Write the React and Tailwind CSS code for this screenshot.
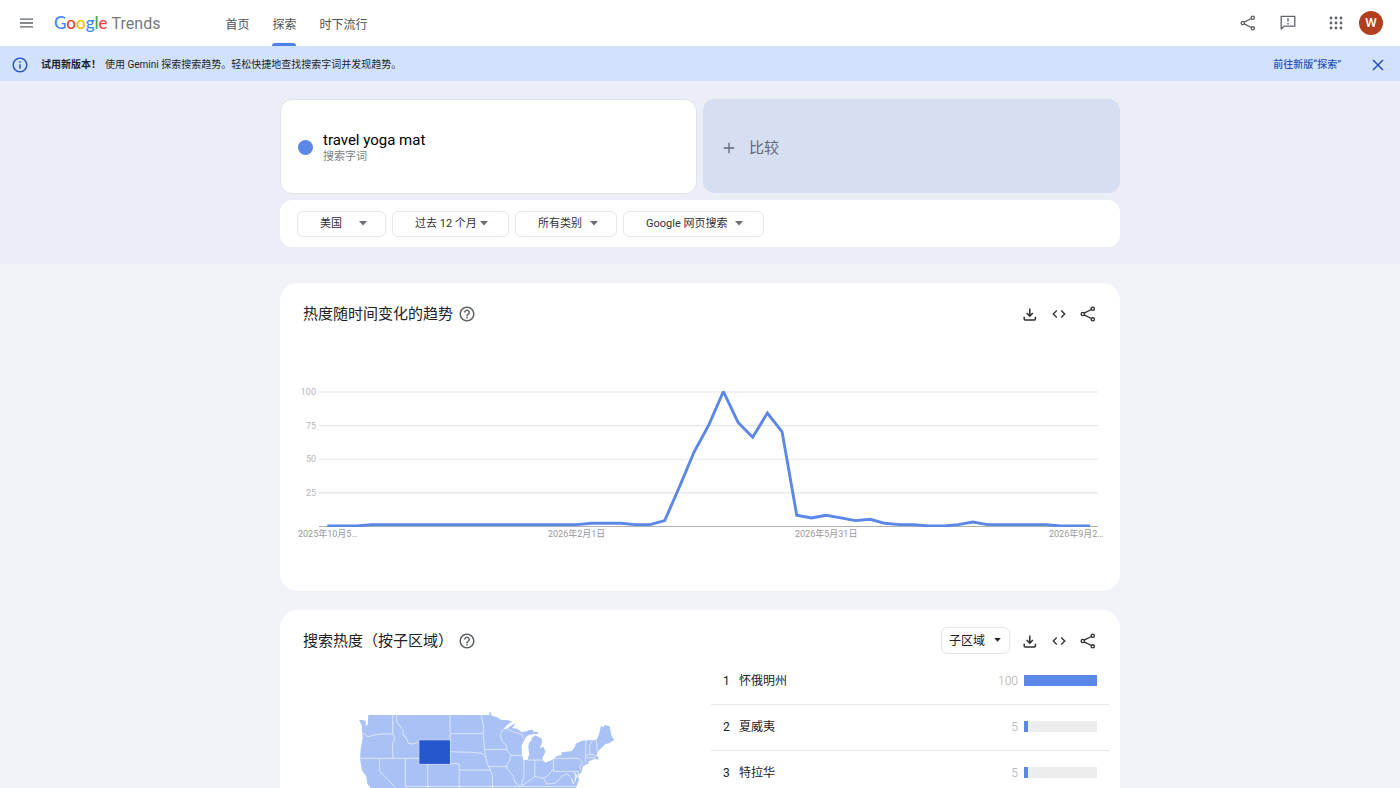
import React from "react";
import { MdHelpOutline, MdInfoOutline, MdCode } from "react-icons/md";

const BLUE = "#5a87e8";

const WEEKLY = [
  0, 0, 0, 1, 1, 1, 1, 1, 1, 1, 1, 1, 1, 1, 1, 1, 1, 1, 2, 2, 2, 1, 1, 4, 29, 55, 75,
  100, 77, 66, 84, 70, 8, 6, 8, 6, 4, 5, 2, 1, 1, 0, 0, 1, 3, 1, 1, 1, 1, 1, 0, 0, 0,
];

const REGIONS = [
  { name: "怀俄明州", value: 100 },
  { name: "夏威夷", value: 5 },
  { name: "特拉华", value: 5 },
];

const FILTERS = [
  { id: "geo", name: "地区", label: "美国", width: "w-[89px]", caret: "right-[19px]" },
  { id: "time", name: "时间范围", label: "过去 12 个月", width: "w-[117px]", caret: "right-[21px]" },
  { id: "cat", name: "类别", label: "所有类别", width: "w-[102px]", caret: "right-[19px]" },
  { id: "prop", name: "搜索类型", label: "Google 网页搜索", width: "w-[141px]", caret: "right-[21px]" },
];

function ShareIcon({ className }) {
  return (
    <svg viewBox="0 0 16 16" className={className} fill="none" stroke="currentColor" strokeWidth="1.4" aria-hidden="true">
      <circle cx="2.8" cy="8" r="1.6" />
      <circle cx="12.8" cy="2.7" r="1.6" />
      <circle cx="12.8" cy="13.3" r="1.6" />
      <path d="M4.2 7.2 11.4 3.5M4.2 8.8l7.2 3.7" />
    </svg>
  );
}

function DownloadIcon() {
  return (
    <svg viewBox="0 0 16 16" className="size-4" fill="none" stroke="currentColor" strokeWidth="1.5" aria-hidden="true">
      <path d="M7.8 2.6v7.2M4.7 7l3.1 3.1L10.9 7" />
      <path d="M2.2 10.8v2.1c0 .6.4 1 1 1h9.2c.6 0 1-.4 1-1v-2.1" />
    </svg>
  );
}

function Caret({ className }) {
  return (
    <svg viewBox="0 0 8 5" className={className} fill="currentColor" aria-hidden="true">
      <path d="M0 0h8L4 4.6z" />
    </svg>
  );
}

function Logo() {
  return (
    <a href="#home" className="ml-5 flex items-baseline gap-1 font-[Lato,sans-serif] text-[17px] leading-6" aria-label="Google Trends">
      <span className="font-medium">
        <span className="text-[#4285f4]">G</span>
        <span className="text-[#ea4335]">o</span>
        <span className="text-[#fbbc05]">o</span>
        <span className="text-[#4285f4]">g</span>
        <span className="text-[#34a853]">l</span>
        <span className="text-[#ea4335]">e</span>
      </span>
      <span className="font-[Roboto,sans-serif] text-[16px] text-[#75797e]">Trends</span>
    </a>
  );
}

function Header() {
  return (
    <header className="flex h-[46px] items-center bg-white pr-[17px] pl-[19px] text-[#5f6368]">
      <button aria-label="主菜单">
        <svg viewBox="0 0 15 10" className="h-[10px] w-[15px]" stroke="currentColor" strokeWidth="1.3" aria-hidden="true">
          <path d="M1 1.2h13M1 5h13M1 8.8h13" />
        </svg>
      </button>
      <Logo />
      <nav className="ml-[65px] flex h-full gap-[23px] text-[12px] text-[#4d5156]">
        <a href="#home" className="flex items-center pt-1">首页</a>
        <a href="#explore" aria-current="page" className="relative flex items-center pt-1">
          探索
          <span className="absolute inset-x-0 bottom-0 h-[3px] rounded-t-[3px] bg-[#4f7fe6]" />
        </a>
        <a href="#now" className="flex items-center pt-1">时下流行</a>
      </nav>
      <div className="ml-auto flex items-center">
        <button aria-label="分享"><ShareIcon className="size-4" /></button>
        <button aria-label="发送反馈" className="ml-[23px]">
          <svg viewBox="0 0 18 18" className="size-[18px]" fill="none" stroke="currentColor" strokeWidth="1.3" aria-hidden="true">
            <path d="M2.2 15V2.3h13.6v9.9H5z" strokeLinejoin="round" />
            <path d="M9 4.2v3.4M9 8.9v1.5" strokeWidth="1.4" />
          </svg>
        </button>
        <button aria-label="Google 应用" className="ml-8">
          <svg viewBox="0 0 14 14" className="size-[14px]" fill="currentColor" aria-hidden="true">
            {[2, 7, 12].map((y) => [2, 7, 12].map((x) => <circle key={`${x}-${y}`} cx={x} cy={y} r="1.4" />))}
          </svg>
        </button>
        <button aria-label="Google 账号" className="ml-4 grid size-6 place-items-center rounded-full bg-[#b0401f] font-[Roboto,sans-serif] text-[13px] font-medium text-white">
          W
        </button>
      </div>
    </header>
  );
}

function Banner() {
  return (
    <div className="flex h-[35px] items-center bg-[#d3e2fc] pt-0.5 pr-[15px] pl-[11px] text-[10px] text-[#1f1f1f]">
      <MdInfoOutline className="size-[18px] text-[#2a56c0]" />
      <p className="ml-3 flex gap-1">
        <strong className="font-semibold">试用新版本！</strong>
        <span>使用 Gemini 探索搜索趋势。轻松快捷地查找搜索字词并发现趋势。</span>
      </p>
      <a href="#new-explore" className="ml-auto font-medium text-[#2450b8]">前往新版“探索”</a>
      <button aria-label="关闭" className="ml-[30px] text-[#2450b8]">
        <svg viewBox="0 0 14 14" className="size-[14px]" stroke="currentColor" strokeWidth="1.5" aria-hidden="true">
          <path d="M2 2l10 10M12 2 2 12" />
        </svg>
      </button>
    </div>
  );
}

function SearchArea() {
  return (
    <section className="bg-[#ebeef7] pt-[18px] pb-[17px]">
      <div className="mx-auto w-3/5">
        <div className="grid grid-cols-2 gap-1.5">
          <div className="flex h-[95px] items-center rounded-xl border border-[#e0e3ec] bg-white pt-0.5 pl-[17px]">
            <span className="size-[15px] rounded-full bg-[#5a87e8]" />
            <div className="ml-[10px]">
              <div className="text-[15px] leading-[18px] text-black">travel yoga mat</div>
              <div className="text-[11px] leading-4 text-[#7d8186]">搜索字词</div>
            </div>
          </div>
          <button className="flex h-[94px] items-center rounded-xl bg-[#d6def1] pt-1 pl-5 text-[15px] text-[#5f6672]">
            <svg viewBox="0 0 12 12" className="size-3" stroke="currentColor" strokeWidth="1.3" aria-hidden="true">
              <path d="M6 .8v10.4M.8 6h10.4" />
            </svg>
            <span className="ml-[14px]">比较</span>
          </button>
        </div>
        <div className="mt-1.5 flex h-[47px] items-center gap-1.5 rounded-xl bg-white pl-[17px]">
          {FILTERS.map((f) => (
            <div key={f.id} className={`relative ${f.width}`}>
              <select aria-label={f.name} className="h-[26px] w-full appearance-none rounded-md border border-[#e6e7ea] bg-white pl-[22px] text-[11px] text-[#303134]">
                <option>{f.label}</option>
              </select>
              <Caret className={`pointer-events-none absolute top-[11px] h-[5px] w-2 text-[#6a6d71] ${f.caret}`} />
            </div>
          ))}
        </div>
      </div>
    </section>
  );
}

function CardTitle({ children }) {
  return (
    <h2 className="flex items-center gap-[5px] text-[15px] leading-6 text-[#212124]">
      {children}
      <button aria-label="帮助" className="text-[#5f6368]"><MdHelpOutline className="size-[18px]" /></button>
    </h2>
  );
}

function Actions() {
  return (
    <div className="flex items-center gap-[13px] text-[#303134]">
      <button aria-label="下载"><DownloadIcon /></button>
      <button aria-label="嵌入"><MdCode className="size-4" /></button>
      <button aria-label="分享"><ShareIcon className="size-4" /></button>
    </div>
  );
}

function TrendChart() {
  const points = WEEKLY.map((v, i) => `${47.3 + i * 14.67},${135 - v * 1.345}`).join(" ");
  return (
    <svg viewBox="0 -10 840 170" className="mt-[54px] block w-full" role="img" aria-label="热度随时间变化的趋势">
      <defs>
        <clipPath id="plot"><rect x="38" y="0" width="782" height="136" /></clipPath>
      </defs>
      {[100, 75, 50, 25].map((v) => (
        <g key={v}>
          <path d={`M39 ${135.5 - v * 1.345}H818`} stroke="#e6e6e8" strokeWidth="1.2" />
          <text x="36" y={138.5 - v * 1.345} textAnchor="end" className="fill-[#b4b4b6] font-[Roboto,sans-serif] text-[9px]">{v}</text>
        </g>
      ))}
      <path d="M39 135.5H818" stroke="#aeafb2" strokeWidth="1" />
      <polyline points={points} fill="none" stroke={BLUE} strokeWidth="2.9" clipPath="url(#plot)" />
      <g className="fill-[#97999c] font-[Roboto,'Noto_Sans_CJK_SC',sans-serif] text-[9px]">
        <text x="18" y="146">2025年10月5…</text>
        <text x="268" y="146">2026年2月1日</text>
        <text x="515" y="146">2026年5月31日</text>
        <text x="769" y="146">2026年9月2…</text>
      </g>
    </svg>
  );
}

const US_OUTLINE =
  "M85 78H448L447 70H452L454 80 470 84 482 92 498 93 516 97 500 109 488 122 500 119 514 109 526 103 521 112 515 117 530 119 545 129 560 127 566 123 577 122 581 128 592 129 595 134 578 136 565 139 558 143 551 156 544 170 545 195 550 214 562 212 567 195 564 172 568 158 573 155 575 146 585 139 597 145 605 149 605 162 598 178 609 172 616 188 607 205 608 214 616 220 635 213 650 201 665 197 662 190 695 186 706 170 705 165 725 155 767 152 773 145 778 128 782 110 789 115 793 108 808 112 813 138 816 145 822 152 808 162 795 166 777 183 771 190 770 201 775 206 774 212 765 209 742 218 748 222 728 231 724 250 714 258 716 272 708 294 700 310 712 330 690 352 668 380 650 400 652 430 664 470 656 492 642 475 628 440 600 425 560 432 530 442 500 436 470 450 440 495 420 485 390 440 360 436 330 410 280 400 220 402 160 385 130 378 110 345 98 320 90 294 82 285 79 262 66 245 60 210 62 180 68 145 66 130 66 112 57 92 72 94 78 98 76 110 83 107Z";

const US_BORDERS =
  "M66 134 74 136 82 143 112 136 160 134M158 78V134L164 147 157 165 159 208M170 78V98L188 122 190 140 196 142 205 163 220 165 237 158M60 208H238M118 208 119 246 165 294M196 208V294M263 224V294M238 154H330M330 78V224M330 134H430M423 78 430 110 429 134 433 180 436 196M330 188 400 190 425 193 436 200 442 226 450 243 457 260V340M238 224H357V292M357 243H450M433 181H500M443 232H496L502 240M488 121 480 136 485 155 500 172 500 184 512 199 508 215 499 228 502 240 520 262 524 280 540 292M512 199H547M500 119 520 129 545 136 550 150M551 214 551 262 543 288M584 213V262M562 213H608M540 292 560 280 584 262 606 268 620 262 640 240M640 208V247M640 208H715L727 220 718 234 722 243M640 247H714L716 270M610 268 620 285 645 282 665 262 678 254 690 262M737 154 736 200 735 220M757 153 748 170 749 197M768 152 771 188M736 198 756 196 771 200M736 206H765M762 205V214M196 292H457M457 292H540M540 292H708M263 292V400M357 292V310H457";

function UsMap() {
  return (
    <svg viewBox="54 66 770 440" className="w-[257px]" role="img" aria-label="美国各州热度地图">
      <path d={US_OUTLINE} fill="#a9c1f5" />
      <path d={US_BORDERS} fill="none" stroke="#e8effd" strokeWidth="2.4" strokeLinejoin="round" />
      <path d="M703 250 707 262 704 278M710 256V266M693 268 700 284" fill="none" stroke="#fff" strokeWidth="3" />
      <rect x="237" y="153" width="93" height="72" fill="#2556cc" stroke="#f4f7fe" strokeWidth="1" />
    </svg>
  );
}

function RegionList() {
  return (
    <ol className="mt-[5px] mr-[11px] w-[398px]">
      {REGIONS.map((r, i) => (
        <li key={r.name} className="flex h-[46px] items-center border-b border-[#e6e7e9] pr-3 pb-0.5 pl-3 text-[12px] text-[#212124]">
          <span className="w-4">{i + 1}</span>
          <span>{r.name}</span>
          <span className="ml-auto font-light text-[#a9abae]">{r.value}</span>
          <span className="ml-1.5 h-[11px] w-[73px] bg-[#ededee]">
            <span className="block h-full bg-[#5a87e8]" style={{ width: `${r.value}%` }} />
          </span>
        </li>
      ))}
    </ol>
  );
}

export default function App() {
  return (
    <div className="h-screen overflow-hidden bg-[#f1f3f8] font-[Roboto,'Noto_Sans_CJK_SC',sans-serif]">
      <Header />
      <Banner />
      <SearchArea />
      <main className="mx-auto mt-[19px] flex w-3/5 flex-col gap-[19px]">
        <section className="rounded-[18px] bg-white pt-[17px] pb-10">
          <div className="flex h-[27px] items-center justify-between pr-6 pl-[23px]">
            <CardTitle>热度随时间变化的趋势</CardTitle>
            <Actions />
          </div>
          <TrendChart />
        </section>
        <section className="rounded-[18px] bg-white pt-[17px] pb-10">
          <div className="flex h-[27px] items-center justify-between pr-6 pl-[23px]">
            <CardTitle>搜索热度（按子区域）</CardTitle>
            <div className="flex items-center gap-3">
              <div className="relative w-[69px]">
                <select aria-label="区域级别" className="h-[27px] w-full appearance-none rounded-md border border-[#e6e7ea] bg-white pl-[7px] text-[12px] text-[#212124]">
                  <option>子区域</option>
                </select>
                <Caret className="pointer-events-none absolute top-[11px] right-[9px] h-1 w-[7px] text-[#212124]" />
              </div>
              <Actions />
            </div>
          </div>
          <div className="flex">
            <div className="flex flex-1 justify-center pt-[57px] pr-[18px]">
              <UsMap />
            </div>
            <RegionList />
          </div>
        </section>
      </main>
    </div>
  );
}
